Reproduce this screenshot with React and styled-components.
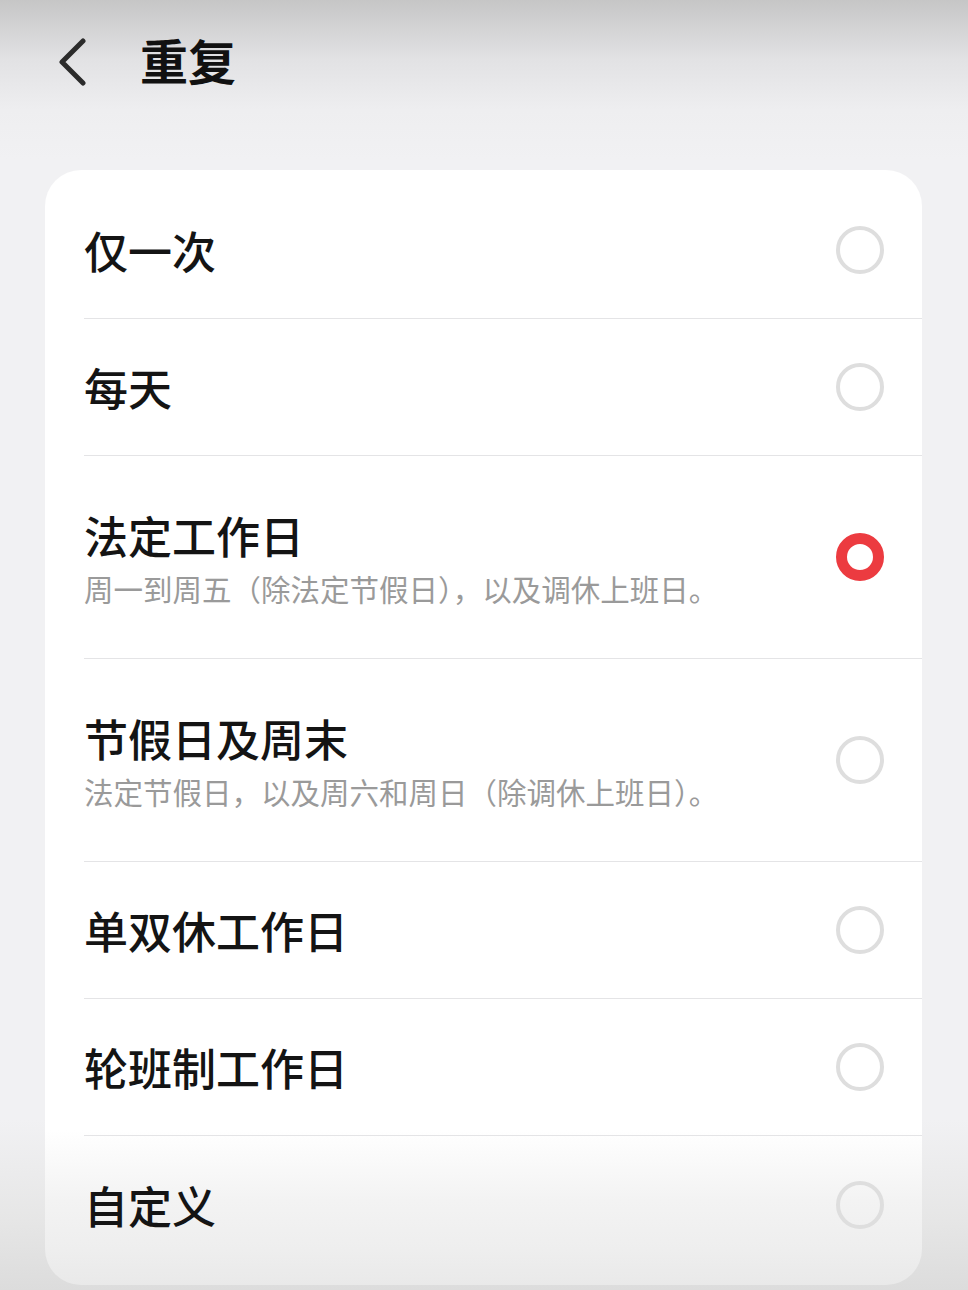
import React from 'react';
import styled, { createGlobalStyle } from 'styled-components';

const Global = createGlobalStyle`
  html, body {
    margin: 0;
    padding: 0;
    background: #f1f1f3;
  }
  body {
    font-family: "Noto Sans CJK SC", "Noto Sans", sans-serif;
    -webkit-font-smoothing: antialiased;
  }
`;

const Page = styled.div`
  min-height: 1290px;
  padding: 0 46px 0 45px;
  box-sizing: border-box;
  overflow: hidden;
  background: linear-gradient(
    #c6c6c6 0px,
    #e2e2e4 60px,
    #eeeef0 110px,
    #f1f1f3 160px,
    #f1f1f3 1120px,
    #e6e6e6 1220px,
    #dcdcdc 1290px
  );
`;

const Header = styled.div`
  display: flex;
  align-items: center;
  height: 124px;
  margin-bottom: 46px;
`;

const Back = styled.button`
  display: flex;
  align-items: center;
  justify-content: center;
  width: 40px;
  height: 50px;
  margin-left: 8px;
  padding: 0;
  border: none;
  background: none;
  cursor: pointer;
`;

const Title = styled.h1`
  margin: -6px 0 0 47px;
  font-size: 48px;
  font-weight: 700;
  color: #111;
`;

const Card = styled.div`
  border-radius: 36px;
  padding: 12px 0;
  background: linear-gradient(#fff 0px, #fff 960px, #f3f3f3 1030px, #eeeeee 1080px, #e9e9e9 100%);
`;

const Row = styled.div`
  display: flex;
  align-items: center;
  justify-content: space-between;
  height: ${(p) => (p.$tall ? 203 : 137)}px;
  margin-left: 39px;
  padding-right: 38px;
  border-bottom: ${(p) => (p.$last ? 'none' : '1.5px solid #e4e4e6')};
  box-sizing: border-box;
  cursor: pointer;
`;

const Texts = styled.div`
  display: flex;
  flex-direction: column;
  gap: 5px;
`;

const Label = styled.div`
  font-size: 44px;
  line-height: 56px;
  font-weight: 500;
  color: #141414;
`;

const Sub = styled.div`
  font-size: 29.5px;
  line-height: 40px;
  color: #9a9a9a;
`;

const Radio = styled.span`
  width: 48px;
  height: 48px;
  border-radius: 50%;
  box-sizing: border-box;
  border: ${(p) => (p.$on ? '11px solid #ec3b40' : '4px solid #dedede')};
  flex-shrink: 0;
`;

const options = [
  { label: '仅一次' },
  { label: '每天' },
  { label: '法定工作日', sub: '周一到周五（除法定节假日），以及调休上班日。', on: true },
  { label: '节假日及周末', sub: '法定节假日，以及周六和周日（除调休上班日）。' },
  { label: '单双休工作日' },
  { label: '轮班制工作日' },
  { label: '自定义' },
];

const App = () => {
  return (
    <Page>
      <Global />
      <Header>
        <Back aria-label="返回">
          <svg width="30" height="48" viewBox="0 0 30 48">
            <path d="M25 3 L4 24 L25 45" fill="none" stroke="#2b2b2b" strokeWidth="5" strokeLinecap="round" strokeLinejoin="round" />
          </svg>
        </Back>
        <Title>重复</Title>
      </Header>
      <Card>
        {options.map((o, i) => (
          <Row key={o.label} $tall={!!o.sub} $last={i === options.length - 1}>
            <Texts>
              <Label>{o.label}</Label>
              {o.sub && <Sub>{o.sub}</Sub>}
            </Texts>
            <Radio $on={o.on} />
          </Row>
        ))}
      </Card>
    </Page>
  );
};

export default App;
